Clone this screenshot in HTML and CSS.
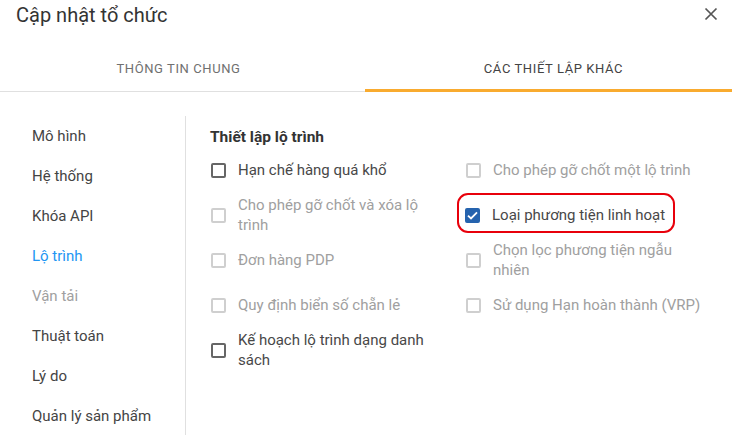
FILE: index.html
```html
<!DOCTYPE html>
<html lang="vi">
<head>
<meta charset="utf-8">
<title>Cập nhật tổ chức</title>
<link rel="stylesheet" href="styles.css">
</head>
<body>
<div class="dialog">
  <header class="dlg-header">
    <h1 class="dlg-title">Cập nhật tổ chức</h1>
    <button class="dlg-close" aria-label="Đóng">
      <svg width="14" height="14" viewBox="0 0 14 14"><path d="M1.5 1.5 L12.5 12.5 M12.5 1.5 L1.5 12.5" stroke="#555" stroke-width="1.7" fill="none"/></svg>
    </button>
  </header>
  <nav class="tabs">
    <div class="tab tab--first">Thông tin chung</div>
    <div class="tab tab--active">Các thiết lập khác</div>
  </nav>
  <div class="dlg-body">
    <ul class="side-nav">
      <li class="side-item">Mô hình</li>
      <li class="side-item">Hệ thống</li>
      <li class="side-item">Khóa API</li>
      <li class="side-item side-item--active">Lộ trình</li>
      <li class="side-item side-item--disabled">Vận tải</li>
      <li class="side-item">Thuật toán</li>
      <li class="side-item">Lý do</li>
      <li class="side-item">Quản lý sản phẩm</li>
    </ul>
    <section class="panel">
      <h2 class="panel-title">Thiết lập lộ trình</h2>
      <div class="opts">
        <div class="opt-row">
          <label class="opt"><span class="cb"></span><span class="opt-text">Hạn chế hàng quá khổ</span></label>
          <label class="opt opt--disabled"><span class="cb"></span><span class="opt-text">Cho phép gỡ chốt một lộ trình</span></label>
        </div>
        <div class="opt-row">
          <label class="opt opt--disabled"><span class="cb"></span><span class="opt-text">Cho phép gỡ chốt và xóa lộ trình</span></label>
          <label class="opt opt--highlight"><span class="cb cb--checked"><svg width="11" height="9" viewBox="0 0 11 9"><path d="M1 4.6 L4 7.5 L10 1.3" stroke="#fff" stroke-width="1.8" fill="none"/></svg></span><span class="opt-text">Loại phương tiện linh hoạt</span></label>
        </div>
        <div class="opt-row opt-row--close">
          <label class="opt opt--disabled"><span class="cb"></span><span class="opt-text">Đơn hàng PDP</span></label>
          <label class="opt opt--disabled"><span class="cb"></span><span class="opt-text">Chọn lọc phương tiện ngẫu nhiên</span></label>
        </div>
        <div class="opt-row">
          <label class="opt opt--disabled"><span class="cb"></span><span class="opt-text">Quy định biển số chẵn lẻ</span></label>
          <label class="opt opt--disabled"><span class="cb"></span><span class="opt-text">Sử dụng Hạn hoàn thành (VRP)</span></label>
        </div>
        <div class="opt-row">
          <label class="opt"><span class="cb"></span><span class="opt-text">Kế hoạch lộ trình dạng danh sách</span></label>
          <div></div>
        </div>
      </div>
    </section>
  </div>
</div>
</body>
</html>
```

FILE: styles.css
```css
* { box-sizing: border-box; }
html, body { margin: 0; padding: 0; }
body {
  font-family: Roboto, "Noto Sans", "Liberation Sans", sans-serif;
  background: #fff;
  color: #424242;
  width: 732px;
  height: 435px;
  overflow: hidden;
}
.dialog { width: 732px; }

.dlg-header {
  display: flex;
  justify-content: space-between;
  align-items: flex-start;
  height: 44px;
  padding: 3px 14px 0 16px;
}
.dlg-title {
  margin: 0;
  font-size: 20px;
  line-height: 24px;
  font-weight: 400;
  color: #333;
}
.dlg-close {
  border: 0;
  background: none;
  padding: 0;
  margin-top: 4px;
  width: 14px;
  height: 14px;
  display: flex;
  cursor: pointer;
}

.tabs {
  display: flex;
  border-bottom: 1px solid #e0e0e0;
}
.tab {
  flex: 1;
  height: 48px;
  margin-bottom: -1px;
  display: flex;
  align-items: center;
  justify-content: center;
  text-transform: uppercase;
  font-size: 13px;
  font-weight: 400;
  letter-spacing: 0.6px;
  color: #707070;
  border-bottom: 3px solid transparent;
  padding-top: 3px;
}
.tab--first { padding-right: 8px; }
.tab--active {
  color: #444;
  padding-left: 10px;
  border-bottom-color: #f9ab2f;
}

.dlg-body {
  display: flex;
  align-items: flex-start;
}
.side-nav {
  list-style: none;
  margin: 24px 0 0 0;
  padding: 0 0 0 32px;
  width: 186px;
  min-height: 330px;
  border-right: 1px solid #e0e0e0;
}
.side-item {
  height: 40px;
  display: flex;
  align-items: center;
  font-size: 15px;
  color: #444;
}
.side-item--active { color: #2196f3; }
.side-item--disabled { color: #a0a0a0; }

.panel {
  flex: 1;
  padding: 35px 12px 0 24px;
}
.panel-title {
  margin: 0 0 13px 0;
  font-size: 15.5px;
  line-height: 20px;
  font-weight: 700;
  color: #333;
}
.opts {
  display: flex;
  flex-direction: column;
  gap: 15px;
}
.opt-row {
  display: grid;
  grid-template-columns: 1fr 1fr;
}
.opt-row--close { margin-top: -10px; }
.opt {
  display: flex;
  align-items: center;
  gap: 12px;
  padding-right: 16px;
  font-size: 15px;
  line-height: 20px;
  color: #484848;
}
.opt--disabled { color: #a0a0a0; }
.cb {
  flex: none;
  width: 15px;
  height: 15px;
  margin-left: 1px;
  border: 2px solid #666;
  border-radius: 2px;
  display: flex;
  align-items: center;
  justify-content: center;
}
.opt--disabled .cb { border-color: #cfcfcf; }
.cb--checked {
  background: #2563ae;
  border-color: #2563ae;
}
.opt--highlight {
  position: relative;
  justify-self: start;
  align-self: center;
  margin-left: -1px;
}
.opt--highlight::before {
  content: "";
  position: absolute;
  top: -12px;
  bottom: -8px;
  left: -7px;
  right: 6px;
  border: 2.5px solid #e8000b;
  border-radius: 11px;
  pointer-events: none;
}
```
